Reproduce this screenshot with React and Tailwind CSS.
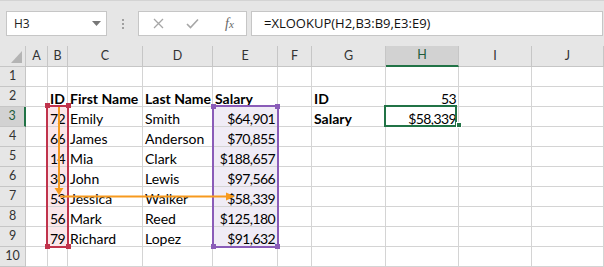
import React from "react";

const COLS = ["A", "B", "C", "D", "E", "F", "G", "H", "I", "J"];
const data = [
  ["72", "Emily", "Smith", "$64,901"],
  ["66", "James", "Anderson", "$70,855"],
  ["14", "Mia", "Clark", "$188,657"],
  ["30", "John", "Lewis", "$97,566"],
  ["53", "Jessica", "Walker", "$58,339"],
  ["56", "Mark", "Reed", "$125,180"],
  ["79", "Richard", "Lopez", "$91,632"],
];

function buildRows() {
  const rows = [];
  for (let r = 1; r <= 10; r++) {
    const cells = Array(10).fill(null).map(() => ({ t: "", bold: false, right: false, num: false }));
    if (r === 2) {
      cells[1] = { t: "ID", bold: true };
      cells[2] = { t: "First Name", bold: true };
      cells[3] = { t: "Last Name", bold: true };
      cells[4] = { t: "Salary", bold: true };
      cells[6] = { t: "ID", bold: true };
      cells[7] = { t: "53", right: true, num: true };
    }
    if (r >= 3 && r <= 9) {
      const d = data[r - 3];
      cells[1] = { t: d[0], right: true, num: true, fill: "pink" };
      cells[2] = { t: d[1] };
      cells[3] = { t: d[2] };
      cells[4] = { t: d[3], right: true, num: true, fill: "lav" };
    }
    if (r === 3) {
      cells[6] = { t: "Salary", bold: true };
      cells[7] = { t: "$58,339", right: true, num: true };
    }
    rows.push(cells);
  }
  return rows;
}

const cellFont = { fontFamily: "Lato, 'Liberation Sans', sans-serif" };
const uiFont = { fontFamily: "'Open Sans', 'Noto Sans', sans-serif" };

export default function App() {
  const rows = buildRows();
  return (
    <div className="w-[604px] h-[267px] overflow-hidden bg-white relative">
      {/* Toolbar */}
      <div className="h-[46px] bg-[#e6e6e6] border-t border-[#d4d4d4] flex items-start pt-[10px]" style={uiFont}>
        <div className="ml-[6px] w-[101px] h-[25px] bg-white border border-[#c6c6c6] flex items-center justify-between pl-[7px] pr-[5px]">
          <span className="text-[12px] text-[#222] leading-none">H3</span>
          <svg width="9" height="5" viewBox="0 0 9 5"><path d="M0 0 L9 0 L4.5 5 Z" fill="#777" /></svg>
        </div>
        <div className="w-[31px] h-[25px] flex flex-col items-center justify-center gap-[2px]">
          <span className="w-[2px] h-[2px] bg-[#a0a0a0]" />
          <span className="w-[2px] h-[2px] bg-[#a0a0a0]" />
          <span className="w-[2px] h-[2px] bg-[#a0a0a0]" />
        </div>
        <div className="w-[109px] h-[25px] bg-white border border-[#c6c6c6] flex items-center">
          <div className="w-[38px] flex justify-center">
            <svg width="11" height="11" viewBox="0 0 11 11"><path d="M1 1 L10 10 M10 1 L1 10" stroke="#a6a6a6" strokeWidth="1.3" /></svg>
          </div>
          <div className="w-[30px] flex justify-center">
            <svg width="13" height="11" viewBox="0 0 13 11"><path d="M1 6 L4.5 9.5 L12 1.5" stroke="#a6a6a6" strokeWidth="1.6" fill="none" /></svg>
          </div>
          <div className="flex-1 flex justify-center pl-[6px]">
            <span className="text-[14px] italic text-[#666] leading-none" style={{ fontFamily: "'Liberation Serif', 'DejaVu Serif', serif" }}>
              f<span className="text-[11px]">x</span>
            </span>
          </div>
        </div>
        <div className="ml-[4px] w-[352px] h-[25px] bg-white border border-[#c6c6c6] flex items-center pl-[12px]">
          <span className="text-[13px] text-[#111] leading-none">=XLOOKUP(H2,B3:B9,E3:E9)</span>
        </div>
      </div>

      {/* Grid */}
      <div className="relative" style={cellFont}>
        <div className="grid grid-cols-[26px_22px_20px_75px_70px_65px_34px_74px_73px_73px_72px]">
          {/* header row */}
          <div className="h-[21px] bg-[#e6e6e6] border-r border-b border-[#c6c6c6] relative">
            <svg className="absolute right-[3px] bottom-[3px]" width="11" height="12" viewBox="0 0 11 12"><path d="M11 0 L11 12 L0 12 Z" fill="#b4b4b4" /></svg>
          </div>
          {COLS.map((c) => (
            <div
              key={c}
              className={
                c === "H"
                  ? "h-[21px] bg-[#d2d2d2] border-r border-[#c6c6c6] border-b-2 border-b-[#217346] flex items-center justify-center text-[12.5px] text-[#1e5c3a]"
                  : "h-[21px] bg-[#e6e6e6] border-r border-b border-[#c6c6c6] flex items-center justify-center text-[12.5px] text-[#333]"
              }
            >
              {c}
            </div>
          ))}
          {rows.map((cells, ri) => (
            <React.Fragment key={ri}>
              <div
                className={
                  ri === 2
                    ? "h-[20px] bg-[#d2d2d2] border-b border-[#c6c6c6] border-r-2 border-r-[#217346] flex items-center justify-center text-[12.5px] text-[#1e5c3a]"
                    : "h-[20px] bg-[#e6e6e6] border-r border-b border-[#c6c6c6] flex items-center justify-center text-[12.5px] text-[#333]"
                }
              >
                {ri + 1}
              </div>
              {cells.map((cell, ci) => (
                <div
                  key={ci}
                  className={[
                    "h-[20px] border-r border-b border-[#d4d4d4] text-[14px] leading-[23px] text-black whitespace-nowrap",
                    cell.right ? "text-right pr-[2px]" : "pl-[2px]",
                    cell.bold ? "font-bold" : "",
                    cell.num ? "tracking-[-0.6px]" : "",
                    cell.fill === "pink" ? "bg-[#fbe6e9]" : cell.fill === "lav" ? "bg-[#f0ecf6]" : "",
                  ].join(" ")}
                >
                  {cell.t}
                </div>
              ))}
            </React.Fragment>
          ))}
        </div>

        {/* Red range B3:B9 */}
        <div className="absolute left-[46px] top-[59px] w-[23px] h-[143px] border-2 border-[#c0334c] pointer-events-none" />
        <div className="absolute left-[45px] top-[57px] w-[5px] h-[5px] bg-[#c0334c]" />
        <div className="absolute left-[66px] top-[57px] w-[5px] h-[5px] bg-[#c0334c]" />
        <div className="absolute left-[45px] top-[198px] w-[5px] h-[5px] bg-[#c0334c]" />
        <div className="absolute left-[66px] top-[198px] w-[5px] h-[5px] bg-[#c0334c]" />

        {/* Purple range E3:E9 */}
        <div className="absolute left-[212px] top-[59px] w-[67px] h-[143px] border-2 border-[#8a5cb8] pointer-events-none" />
        <div className="absolute left-[211px] top-[58px] w-[5px] h-[5px] bg-[#8a5cb8]" />
        <div className="absolute left-[275px] top-[58px] w-[5px] h-[5px] bg-[#8a5cb8]" />
        <div className="absolute left-[211px] top-[198px] w-[5px] h-[5px] bg-[#8a5cb8]" />
        <div className="absolute left-[275px] top-[198px] w-[5px] h-[5px] bg-[#8a5cb8]" />

        {/* Selected H3 */}
        <div className="absolute left-[384px] top-[59px] w-[73px] h-[22px] border-2 border-[#217346] pointer-events-none" />
        <div className="absolute left-[456px] top-[76px] w-[6px] h-[6px] bg-[#217346] border border-white" />

        {/* Arrows */}
        <svg className="absolute left-0 top-0 pointer-events-none" width="604" height="221" viewBox="0 46 604 221">
          <path d="M59 107 L59 189" stroke="#f79a1e" strokeWidth="2" fill="none" />
          <path d="M54.5 188 L63.5 188 L59 195 Z" fill="#f79a1e" />
          <path d="M60 196.5 L227 196.5" stroke="#f79a1e" strokeWidth="2" fill="none" />
          <path d="M226 192.5 L235 196.5 L226 200.5 Z" fill="#f79a1e" />
        </svg>
      </div>
    </div>
  );
}
